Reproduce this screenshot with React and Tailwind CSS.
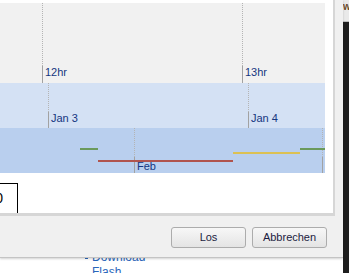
const ticks = [
    { band: 0, x: 42, label: "12hr" },
    { band: 0, x: 242, label: "13hr" },
    { band: 1, x: 48, label: "Jan 3" },
    { band: 1, x: 248, label: "Jan 4" },
    { band: 2, x: 134, label: "Feb" },
    { band: 2, x: 322, label: "" },
]

const bands = [
    { h: "h-[80px]", bg: "bg-[#f1f1f1]", solid: "h-[17px]", labelBottom: "bottom-[4px]" },
    { h: "h-[45px]", bg: "bg-[#d4e1f4]", solid: "h-[16px]", labelBottom: "bottom-[3px]" },
    { h: "h-[45px]", bg: "bg-[#b9cfee]", solid: "h-[16px]", labelBottom: "bottom-[0px]" },
]

// events drawn in the lowest band
const events = [
    { left: 80, width: 18, top: 20, color: "#6b9a5c" },
    { left: 98, width: 135, top: 32, color: "#b0544e" },
    { left: 233, width: 67, top: 24, color: "#dcc153" },
    { left: 300, width: 25, top: 20, color: "#6b9a5c" },
]

const Band = ({ index }) => {
    const band = bands[index]
    return (
        <div className={`relative w-[325px] ${band.h} ${band.bg}`}>
            {ticks.filter(t => t.band === index).map(t => (
                <div key={t.x} className="absolute top-0 bottom-0 flex flex-col" style={{ left: t.x }}>
                    <div className="flex-1 border-l border-dotted border-[#b4b4b4]" />
                    <div className={`${band.solid} border-l border-[#a2a2a2]`} />
                    {t.label && (
                        <span className={`absolute left-[3px] ${band.labelBottom} text-[11px] leading-[13px] text-[#15367f] whitespace-nowrap`}>
                            {t.label}
                        </span>
                    )}
                </div>
            ))}
            {index === 2 && events.map(e => (
                <div
                    key={e.left}
                    className="absolute h-[2px]"
                    style={{ left: e.left, width: e.width, top: e.top, backgroundColor: e.color }}
                />
            ))}
        </div>
    )
}

const Button = ({ children }) => (
    <button className="w-[75px] h-[21px] rounded-[3px] border border-[#acacac] bg-linear-to-b from-[#f7f7f7] to-[#e4e4e4] text-[11px] leading-none text-[#1b1b3f]">
        {children}
    </button>
)

export default function App() {
    return (
        <div className="w-[349px] h-[273px] flex overflow-hidden bg-white" style={{ fontFamily: '"Liberation Sans", Arial, sans-serif' }}>
            <div className="w-[343px] flex flex-col">
                {/* dialog */}
                <div className="relative z-10 h-[258px] flex flex-col bg-[#f0f0f0] border-b border-[#c4c4c4] shadow-[0_1px_2px_rgba(0,0,0,0.18)]">
                    <div className="h-[216px] mr-[8px] pt-[3px] bg-white border-r-2 border-b-[3px] border-[#d6d6d6] overflow-hidden">
                        <Band index={0} />
                        <Band index={1} />
                        <Band index={2} />
                        <div className="mt-[10px] w-[18px] h-[30px] border-t border-r border-black flex items-center justify-end overflow-hidden">
                            <span className="mr-[14px] text-[14px] text-black">0</span>
                        </div>
                    </div>
                    <div className="flex-1 flex justify-end gap-[6px] pt-[11px] pr-[16px]">
                        <Button>Los</Button>
                        <Button>Abbrechen</Button>
                    </div>
                </div>
                {/* page behind the dialog */}
                <div className="flex-1 overflow-hidden">
                    <div className="-mt-[8px] ml-[85px] text-[12px] leading-[15px] text-[#2a66bb]">
                        <div className="flex items-center gap-[4px]">
                            <span className="w-[3px] h-[2px] bg-[#2a66bb]" />
                            <span>Download</span>
                        </div>
                        <div className="ml-[7px]">Flash</div>
                    </div>
                </div>
            </div>
            {/* window behind, right edge */}
            <div className="w-[6px] flex flex-col bg-[#1e1e1e]">
                <div className="h-[22px] bg-[#e9e9e9] border-b border-[#bdbdbd] overflow-hidden">
                    <span className="block mt-[2px] text-[10px] leading-none font-bold text-[#6b4a2a]">w</span>
                </div>
            </div>
        </div>
    )
}
